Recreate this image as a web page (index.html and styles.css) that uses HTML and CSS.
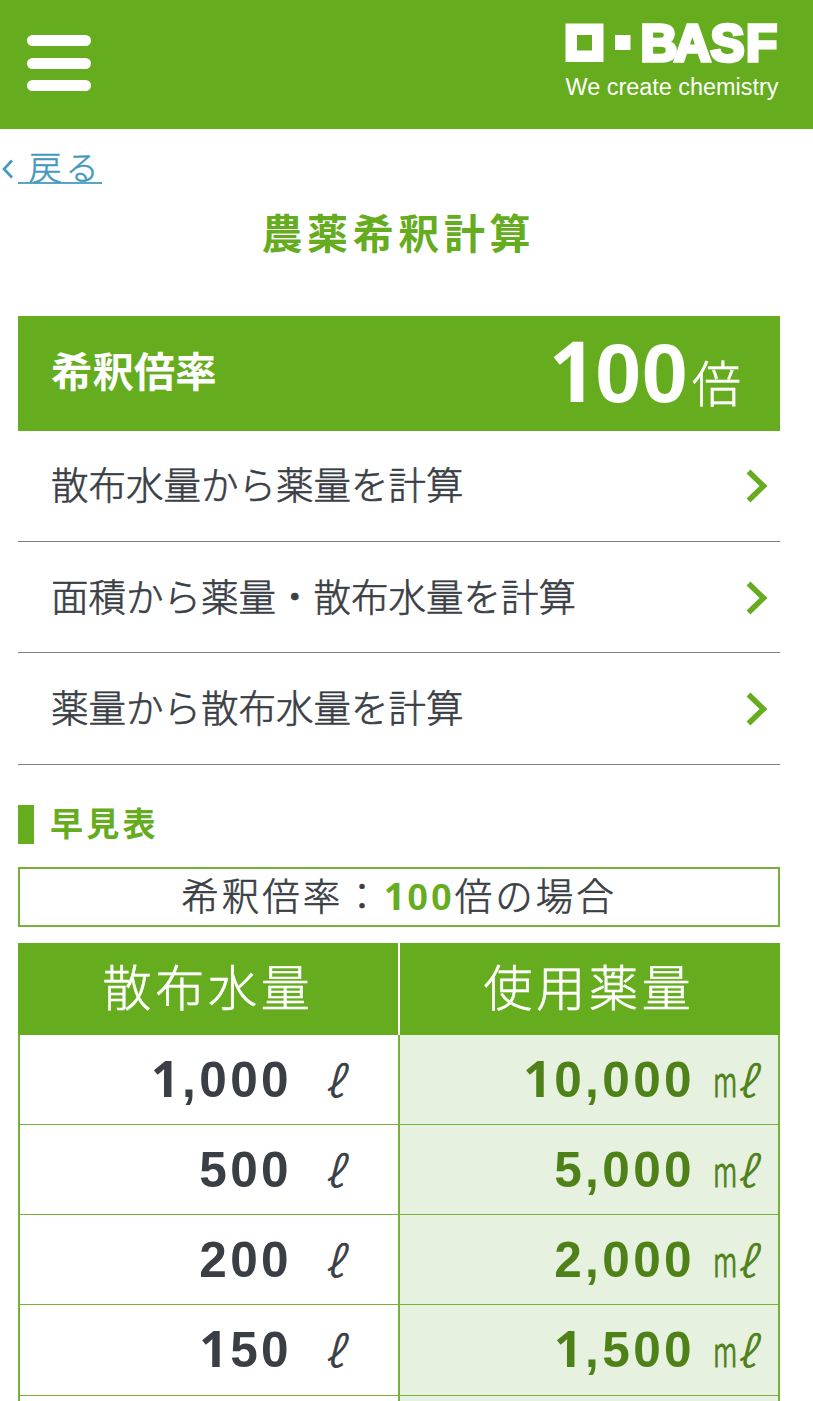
FILE: index.html
```html
<!DOCTYPE html>
<html lang="ja">
<head>
<meta charset="utf-8">
<title>農薬希釈計算</title>
<link rel="stylesheet" href="styles.css">
</head>
<body>
<header class="site-header">
  <div class="menu"><span></span><span></span><span></span></div>
  <svg class="logo" width="218" height="84" viewBox="0 0 218 84">
    <path d="M3.500 3.500h38v38.500h-38zM15 15v15.500h15V15z" fill="#fff" fill-rule="evenodd"/>
    <path d="M53 15h15.500v15H53z" fill="#fff"/>
    <text class="logo-name" y="40.500" x="78.500 112 148.500 184">BASF</text>
    <text class="logo-tag" x="3.500" y="74.500" textLength="213" lengthAdjust="spacingAndGlyphs">We create chemistry</text>
  </svg>
</header>
<nav class="back">
  <svg width="12" height="20" viewBox="0 0 12 20"><path d="M11 1.500L3 10l8 8.500" fill="none" stroke="#4299bd" stroke-width="2.600"/></svg>
  <a class="back-link">&nbsp;戻る</a>
</nav>
<main>
  <h1>農薬希釈計算</h1>
  <div class="rate"><span class="rate-label">希釈倍率</span><span class="rate-value"><b><span class="one">1</span>00</b><span class="times">倍</span></span></div>
  <ul class="links">
    <li><span>散布水量から薬量を計算</span><svg width="24" height="34" viewBox="0 0 24 34"><path d="M2.500 2.500L17.500 17 2.500 31.500" fill="none" stroke="#65ac1e" stroke-width="5.500"/></svg></li>
    <li><span>面積から薬量・散布水量を計算</span><svg width="24" height="34" viewBox="0 0 24 34"><path d="M2.500 2.500L17.500 17 2.500 31.500" fill="none" stroke="#65ac1e" stroke-width="5.500"/></svg></li>
    <li><span>薬量から散布水量を計算</span><svg width="24" height="34" viewBox="0 0 24 34"><path d="M2.500 2.500L17.500 17 2.500 31.500" fill="none" stroke="#65ac1e" stroke-width="5.500"/></svg></li>
  </ul>
  <h2>早見表</h2>
  <div class="case">希釈倍率：<b><span class="one">1</span>00</b>倍の場合</div>
  <div class="table">
    <div class="th">散布水量</div><div class="th">使用薬量</div>
    <div class="td"><span class="one">1</span>,000<i>ℓ</i></div><div class="td dose"><span class="one">1</span>0,000<i><span class="m">m</span>ℓ</i></div>
    <div class="td">500<i>ℓ</i></div><div class="td dose">5,000<i><span class="m">m</span>ℓ</i></div>
    <div class="td">200<i>ℓ</i></div><div class="td dose">2,000<i><span class="m">m</span>ℓ</i></div>
    <div class="td"><span class="one">1</span>50<i>ℓ</i></div><div class="td dose"><span class="one">1</span>,500<i><span class="m">m</span>ℓ</i></div>
    <div class="td last"></div><div class="td dose last"></div>
  </div>
</main>
</body>
</html>
```
FILE: styles.css
```css
* { box-sizing: border-box; }
body {
  margin: 0;
  background: #fff;
  color: #3a3e45;
  font-family: "Liberation Sans", "Noto Sans CJK JP", sans-serif;
  white-space: nowrap;
}
.site-header {
  height: 129px;
  padding: 20px 33px 0 27px;
  background: #65ac1e;
  display: flex;
  justify-content: space-between;
}
.menu {
  width: 64px;
  padding-top: 15px;
  display: flex;
  flex-direction: column;
  gap: 11.5px;
}
.menu span { height: 11px; border-radius: 6px; background: #fff; }
.logo { display: block; overflow: visible; }
.logo-name {
  font: bold 51px "Liberation Sans", sans-serif;
  fill: #fff;
  stroke: #fff;
  stroke-width: 3.6px;
}
.logo-tag { font: 23.5px "Liberation Sans", sans-serif; fill: #fff; }
.one {
  display: inline-block;
  width: .556em;
  margin-right: .07em;
  font-family: "Open Sans", sans-serif;
  line-height: 1;
  letter-spacing: 0;
  text-align: center;
}
.back {
  height: 82px;
  padding-top: 21px;
  display: flex;
  align-items: flex-start;
  color: #4299bd;
}
.back svg { margin: 9px 5px 0 1px; }
.back-link {
  width: 84px;
  height: 34px;
  border-bottom: 2px solid #5aa5c2;
  font-size: 33px;
  line-height: 37px;
  letter-spacing: 3.7px;
  text-indent: -2px;
  font-weight: 300;
  -webkit-text-stroke: .6px;
}
main { width: 762px; margin-left: 18px; }
h1 {
  margin: 0;
  height: 104.6px;
  padding-left: 243.500px;
  color: #65ac1e;
  font-size: 41px;
  line-height: 49px;
  letter-spacing: 4.6px;
}
.rate {
  height: 115px;
  padding: 0 39px 0 33px;
  background: #65ac1e;
  color: #fff;
  display: flex;
  justify-content: space-between;
}
.rate-label { font-size: 41.4px; font-weight: bold; line-height: 114px; }
.rate-value { display: flex; align-items: baseline; line-height: 114px; }
.rate-value b { font-size: 83.500px; }
.rate-value .one { margin-right: 0; }
.times { font-size: 49px; font-weight: 300; margin-left: 4px; -webkit-text-stroke: .6px; }
.links { margin: 0; padding: 0; list-style: none; }
.links li {
  height: 111.4px;
  padding: 1px 10px 0 33px;
  border-bottom: 1px solid #7c7e82;
  display: flex;
  align-items: center;
  justify-content: space-between;
  font-size: 37.500px;
  line-height: 56px;
  font-weight: 300;
  -webkit-text-stroke: .6px;
}
h2 {
  margin: 40px 0 23px;
  height: 39px;
  padding-left: 16px;
  border-left: 16px solid #65ac1e;
  color: #65ac1e;
  font-size: 33px;
  line-height: 40px;
  letter-spacing: 3.2px;
}
.case {
  height: 60px;
  border: 2px solid #76b23b;
  text-align: center;
  font-size: 37.500px;
  line-height: 56px;
  letter-spacing: 3px;
  font-weight: 300;
  -webkit-text-stroke: .6px;
}
.case b { color: #65ac1e; font-weight: 700; -webkit-text-stroke: 0; }
.table {
  margin-top: 16px;
  display: grid;
  grid-template-columns: 380px 382px;
  grid-template-rows: 92px repeat(4, 90.2px) 6px;
}
.th {
  background: #65ac1e;
  color: #fff;
  text-align: center;
  font-size: 49px;
  line-height: 93px;
  letter-spacing: 3.8px;
  font-weight: 300;
  -webkit-text-stroke: .6px;
}
.th:nth-child(2) { border-left: 2px solid #fff; padding-right: 2px; }
.td {
  border-left: 2px solid #76b23b;
  border-bottom: 1.5px solid #76b23b;
  padding-right: 16px;
  display: flex;
  align-items: baseline;
  justify-content: flex-end;
  font-size: 49.5px;
  font-weight: bold;
  line-height: 90px;
  letter-spacing: 3.4px;
}
.td.last { border-bottom: 0; }
.td i {
  width: 90px;
  padding-right: 6px;
  text-align: center;
  font: italic 300 42px/88px "Noto Sans CJK JP", sans-serif;
  letter-spacing: 0;
  -webkit-text-stroke: .8px;
}
.td.dose { background: #e7f1df; color: #4f8119; border-right: 2px solid #76b23b; }
.td.dose i {
  width: 67px;
  padding-right: 7px;
  display: flex;
  justify-content: flex-end;
}
.m {
  font-style: normal;
  margin-right: -14px;
  transform: scaleX(.64);
  transform-origin: left;
  -webkit-text-stroke: 1.2px;
}
```
